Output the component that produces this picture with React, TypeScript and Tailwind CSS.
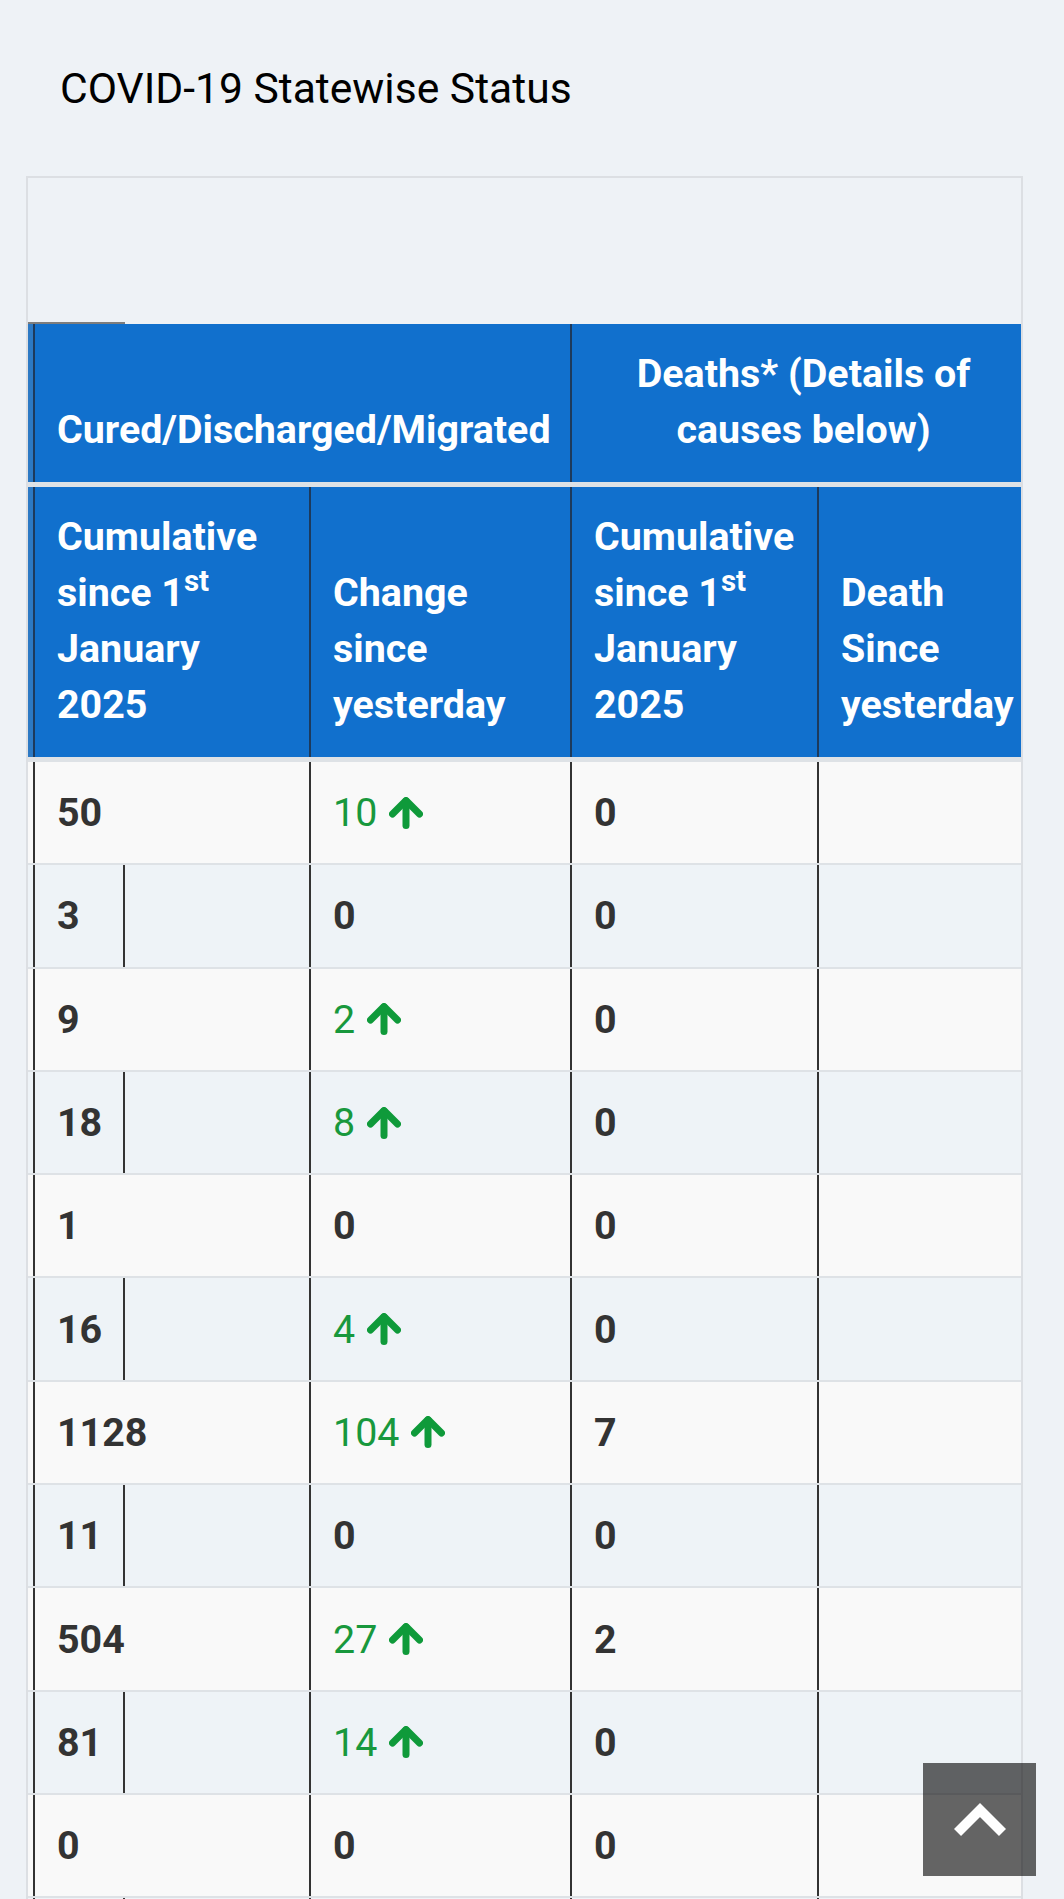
import React from "react";

type Row = { cum: string; change: string; up?: boolean; deaths: string };

const rows: Row[] = [
  { cum: "50", change: "10", up: true, deaths: "0" },
  { cum: "3", change: "0", deaths: "0" },
  { cum: "9", change: "2", up: true, deaths: "0" },
  { cum: "18", change: "8", up: true, deaths: "0" },
  { cum: "1", change: "0", deaths: "0" },
  { cum: "16", change: "4", up: true, deaths: "0" },
  { cum: "1128", change: "104", up: true, deaths: "7" },
  { cum: "11", change: "0", deaths: "0" },
  { cum: "504", change: "27", up: true, deaths: "2" },
  { cum: "81", change: "14", up: true, deaths: "0" },
  { cum: "0", change: "0", deaths: "0" },
  { cum: "", change: "", deaths: "" },
];

const ArrowUp = () => (
  <svg
    width="34"
    height="32"
    viewBox="0 0 34 32"
    className="ml-[12px] shrink-0"
    fill="none"
    stroke="#0f9a3a"
    strokeWidth="7"
    strokeLinecap="round"
    strokeLinejoin="round"
  >
    <path d="M3.5 17 17 3.5 30.5 17" />
    <path d="M17 4v24.5" />
  </svg>
);

const App: React.FC = () => {
  return (
    <div className="relative h-[1899px] overflow-hidden bg-[#eef2f6] font-[Roboto,sans-serif]">
      <h1 className="pl-[60px] pt-[63px] text-[42.6px] leading-[50px] font-normal text-black">
        COVID-19 Statewise Status
      </h1>

      <div className="mt-[63px] ml-[26px] w-[997px] border-2 border-[#dcdfe3] overflow-hidden">
        <div className="h-[144px]" />
        <div className="h-[2px] w-[97px] bg-[#7d7d7d]" />

        {/* header */}
        <div className="w-[1007px] text-white font-bold text-[39.4px] leading-[56px]">
          <div className="grid grid-cols-[5px_537px_465px] h-[158px] bg-[#1170cd]">
            <div className="bg-[#2c79c4]" />
            <div className="border-l-2 border-[#1d3a5c] px-[22px] pb-[24px] flex flex-col justify-end text-center whitespace-nowrap">
              Cured/Discharged/Migrated
            </div>
            <div className="border-l-2 border-[#1d3a5c] px-[22px] pb-[24px] flex flex-col justify-end text-center whitespace-nowrap">
              <span>Deaths* (Details of</span>
              <span>causes below)</span>
            </div>
          </div>
          <div className="h-[5px] bg-[#dee2e6]" />
          <div className="grid grid-cols-[5px_276px_261px_247px_218px] h-[270px] bg-[#1170cd]">
            <div className="bg-[#2c79c4]" />
            <div className="border-l-2 border-[#1d3a5c] px-[22px] pb-[24px] flex flex-col justify-end whitespace-nowrap">
              <span>Cumulative</span>
              <span>
                since 1<sup>st</sup>
              </span>
              <span>January</span>
              <span>2025</span>
            </div>
            <div className="border-l-2 border-[#1d3a5c] px-[22px] pb-[24px] flex flex-col justify-end whitespace-nowrap">
              <span>Change</span>
              <span>since</span>
              <span>yesterday</span>
            </div>
            <div className="border-l-2 border-[#1d3a5c] px-[22px] pb-[24px] flex flex-col justify-end whitespace-nowrap">
              <span>Cumulative</span>
              <span>
                since 1<sup>st</sup>
              </span>
              <span>January</span>
              <span>2025</span>
            </div>
            <div className="border-l-2 border-[#1d3a5c] px-[22px] pb-[24px] flex flex-col justify-end whitespace-nowrap">
              <span>Death</span>
              <span>Since</span>
              <span>yesterday</span>
            </div>
          </div>
          <div className="h-[5px] bg-[#dee2e6]" />
        </div>

        {/* body */}
        <div className="w-[1007px] text-[39.4px] leading-[59px] text-[#333]">
          {rows.map((r, i) => {
            const even = i % 2 === 1;
            return (
              <div
                key={i}
                className={
                  even
                    ? "grid grid-cols-[5px_276px_261px_247px_218px] h-[103.3px] border-b-2 border-[#dee2e6] bg-[#eef3f7]"
                    : "grid grid-cols-[5px_276px_261px_247px_218px] h-[103.3px] border-b-2 border-[#dee2e6] bg-[#f9f9f9]"
                }
              >
                <div />
                {even ? (
                  <div className="border-l-2 border-[#333] flex">
                    <div className="w-[90px] border-r-2 border-[#333] pl-[22px] flex items-center font-bold">
                      {r.cum}
                    </div>
                  </div>
                ) : (
                  <div className="border-l-2 border-[#333] pl-[22px] flex items-center font-bold">
                    {r.cum}
                  </div>
                )}
                <div className="border-l-2 border-[#333] pl-[22px] flex items-center">
                  {r.up ? (
                    <>
                      <span className="text-[#18983d] font-normal">{r.change}</span>
                      <ArrowUp />
                    </>
                  ) : (
                    <span className="font-bold">{r.change}</span>
                  )}
                </div>
                <div className="border-l-2 border-[#333] pl-[22px] flex items-center font-bold">
                  {r.deaths}
                </div>
                <div className="border-l-2 border-[#333]" />
              </div>
            );
          })}
        </div>
      </div>

      <button className="absolute left-[923px] top-[1763px] w-[113px] h-[113px] bg-black/60 flex items-center justify-center">
        <svg width="52" height="34" viewBox="0 0 52 34" fill="none" stroke="white" strokeWidth="10" strokeLinejoin="miter">
          <path d="M3.5 29.5 26 7.07 48.5 29.5" />
        </svg>
      </button>
    </div>
  );
};

export default App;
